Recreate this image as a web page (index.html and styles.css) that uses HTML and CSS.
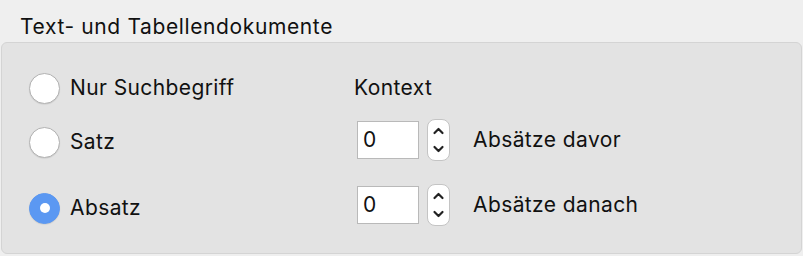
FILE: index.html
```html
<!DOCTYPE html>
<html lang="de">
<head>
<meta charset="utf-8">
<link rel="stylesheet" href="styles.css">
</head>
<body>
<div class="title">Text- und Tabellendokumente</div>
<div class="box">
  <div class="row row1">
    <div class="left"><span class="radio"></span><span class="label">Nur Suchbegriff</span></div>
    <div class="right"><span class="ctx">Kontext</span></div>
  </div>
  <div class="row row2">
    <div class="left nudge2"><span class="radio"></span><span class="label">Satz</span></div>
    <div class="right">
      <span class="input">0</span>
      <span class="stepper"><svg width="23" height="42" viewBox="0 0 23 42"><path d="M7.5 14 L11.5 10 L15.5 14" fill="none" stroke="#222" stroke-width="2.2" stroke-linecap="round" stroke-linejoin="round"/><path d="M7.5 28 L11.5 32 L15.5 28" fill="none" stroke="#222" stroke-width="2.2" stroke-linecap="round" stroke-linejoin="round"/></svg></span>
      <span class="label after">Absätze davor</span>
    </div>
  </div>
  <div class="row row3">
    <div class="left nudge3"><span class="radio on"></span><span class="label">Absatz</span></div>
    <div class="right">
      <span class="input">0</span>
      <span class="stepper"><svg width="23" height="42" viewBox="0 0 23 42"><path d="M7.5 14 L11.5 10 L15.5 14" fill="none" stroke="#222" stroke-width="2.2" stroke-linecap="round" stroke-linejoin="round"/><path d="M7.5 28 L11.5 32 L15.5 28" fill="none" stroke="#222" stroke-width="2.2" stroke-linecap="round" stroke-linejoin="round"/></svg></span>
      <span class="label after">Absätze danach</span>
    </div>
  </div>
</div>
</body>
</html>
```
FILE: styles.css
```css
html, body {
  margin: 0;
  padding: 0;
  background: #efefef;
  width: 803px;
  height: 256px;
  overflow: hidden;
  font-family: Inter, "Liberation Sans", Arial, sans-serif;
  font-size: 21px;
  letter-spacing: 0.4px;
  color: #111;
}
.title {
  height: 42px;
  box-sizing: border-box;
  padding: 14px 0 0 20px;
  line-height: 26px;
  letter-spacing: 0.62px;
}
.box {
  margin: 0 1px;
  height: 212px;
  box-sizing: border-box;
  background: #e3e3e3;
  border: 1px solid #d4d4d4;
  border-radius: 6px;
  padding: 29px 0 0 27px;
}
.row {
  display: flex;
  align-items: center;
}
.row1 { height: 32px; }
.row2 { height: 44px; margin-top: 14px; }
.row3 { height: 44px; margin-top: 21px; }
.left {
  width: 327px;
  display: flex;
  align-items: center;
}
.nudge2 { margin-top: 4px; }
.nudge3 { margin-top: 6px; }
.right {
  display: flex;
  align-items: center;
}
.radio {
  width: 31px;
  height: 31px;
  box-sizing: border-box;
  border-radius: 50%;
  background: #fff;
  border: 1px solid #b3b3b3;
  box-shadow: 0 0.5px 1px rgba(0,0,0,0.12);
  margin-right: 10px;
  display: flex;
  align-items: center;
  justify-content: center;
}
.radio.on {
  background: #5b98f2;
  border-color: #5b98f2;
}
.radio.on::after {
  content: "";
  width: 10px;
  height: 10px;
  border-radius: 50%;
  background: #fff;
}
.label {
  line-height: 26px;
}
.ctx {
  line-height: 26px;
  margin-left: -2px;
}
.input {
  width: 62px;
  height: 38px;
  box-sizing: border-box;
  background: #fff;
  border: 1px solid #b9b9b9;
  margin-left: 1px;
  padding-left: 5px;
  line-height: 36px;
}
.stepper {
  width: 23px;
  height: 42px;
  box-sizing: border-box;
  margin-left: 8px;
  background: #fff;
  border: 1px solid #c4c4c4;
  border-radius: 8px;
  display: flex;
  align-items: center;
  justify-content: center;
  overflow: hidden;
}
.stepper svg {
  display: block;
  flex: none;
}
.after {
  margin-left: 23px;
}
```
